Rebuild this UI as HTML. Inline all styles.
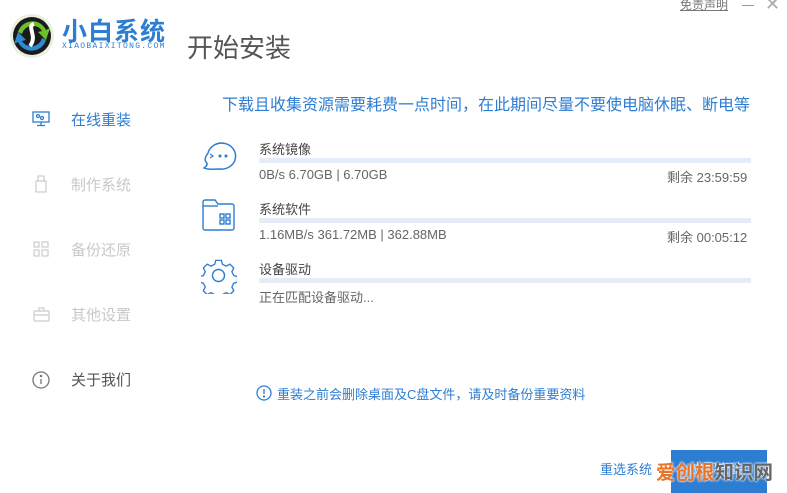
<!DOCTYPE html>
<html><head><meta charset="utf-8">
<style>
*{margin:0;padding:0;box-sizing:border-box}
body{width:787px;height:493px;background:#fff;position:relative;overflow:hidden;font-family:"Liberation Sans","Noto Sans CJK SC",sans-serif;color:#555}
.a{position:absolute;white-space:nowrap}
.bar{position:absolute;left:259px;width:492px;height:5px;background:#e4ecf8}
.nav{font-size:15px;left:71px}
</style></head><body>
<svg class="a" style="left:8px;top:12px" width="50" height="48" viewBox="0 0 50 48">
<circle cx="24" cy="24" r="22" fill="#e8f0e0"/>
<circle cx="24" cy="24" r="19" fill="#1a1a1a"/>
<path d="M10 20 A15 15 0 0 1 38 18 L42 16 L38 28 L30 20 L34 19 A11 11 0 0 0 14 22Z" fill="#6cbf2a"/>
<path d="M38 28 A15 15 0 0 1 10 30 L6 32 L10 20 L18 28 L14 29 A11 11 0 0 0 34 26Z" fill="#2e8bd0"/>
<path d="M26 12 C18 14 30 24 22 34" stroke="#fff" stroke-width="4" fill="none"/>
</svg>
<div class="a" style="left:62px;top:12px;font-size:25px;font-weight:bold;color:#2d7ed3;letter-spacing:1px">小白系统</div>
<div class="a" style="left:62px;top:42px;font-size:8px;color:#2d7ed3;letter-spacing:1.3px;font-family:'Liberation Mono',monospace">XIAOBAIXITONG.COM</div>
<div class="a" style="left:187px;top:28px;font-size:26px;color:#555">开始安装</div>
<div class="a" style="left:680px;top:-4px;font-size:12px;color:#777;text-decoration:underline">免责声明</div>
<div class="a" style="left:742px;top:5px;width:12px;height:1px;background:#999"></div>
<div class="a" style="left:765px;top:-6px;font-size:18px;color:#aaa;font-weight:200">✕</div>

<svg class="a" style="left:32px;top:111px" width="18" height="16" viewBox="0 0 18 16" fill="none" stroke="#2d7ed3" stroke-width="1.3"><rect x="1" y="1" width="16" height="10"/><line x1="9" y1="11" x2="9" y2="14"/><line x1="5" y1="14.5" x2="13" y2="14.5"/><circle cx="6" cy="5" r="1.5"/><circle cx="10" cy="7" r="1.5"/></svg>
<div class="a nav" style="top:109px;color:#2d7ed3">在线重装</div>
<svg class="a" style="left:35px;top:175px" width="12" height="18" viewBox="0 0 12 18" fill="none" stroke="#ccc" stroke-width="1.2"><rect x="1" y="6" width="10" height="11"/><rect x="3" y="1" width="6" height="5"/></svg>
<div class="a nav" style="top:174px;color:#c8c8c8">制作系统</div>
<svg class="a" style="left:33px;top:241px" width="16" height="16" viewBox="0 0 16 16" fill="none" stroke="#ccc" stroke-width="1.2"><rect x="1" y="1" width="5" height="5"/><rect x="9" y="1" width="6" height="5"/><rect x="1" y="9" width="5" height="6"/><rect x="9" y="9" width="6" height="6"/></svg>
<div class="a nav" style="top:239px;color:#c8c8c8">备份还原</div>
<svg class="a" style="left:33px;top:307px" width="17" height="15" viewBox="0 0 17 15" fill="none" stroke="#ccc" stroke-width="1.2"><rect x="1" y="4" width="15" height="10" rx="1"/><path d="M6 4V1h5v3M1 8h15"/></svg>
<div class="a nav" style="top:304px;color:#c8c8c8">其他设置</div>
<svg class="a" style="left:32px;top:371px" width="18" height="18" viewBox="0 0 18 18" fill="none" stroke="#777" stroke-width="1.3"><circle cx="9" cy="9" r="8"/><line x1="9" y1="8" x2="9" y2="13"/><circle cx="9" cy="5" r=".6" fill="#777"/></svg>
<div class="a nav" style="top:369px;color:#555">关于我们</div>

<div class="a" style="left:222px;top:91px;font-size:16px;color:#2d7ed3">下载且收集资源需要耗费一点时间，在此期间尽量不要使电脑休眠、断电等</div>

<svg class="a" style="left:200px;top:139px" width="40" height="34" viewBox="0 0 40 34" fill="none" stroke="#2d7ed3" stroke-width="1.5"><path d="M8 14 A14 13 0 1 1 20 30 C14 30 8 31 4 29 C7 27 8 25 6 23 C4 20 6 17 8 14Z"/><path d="M10 15 l3 2 -3 2" stroke-width="1.2"/><circle cx="20" cy="17" r=".8" fill="#2d7ed3"/><circle cx="26" cy="17" r=".8" fill="#2d7ed3"/></svg>
<div class="a" style="left:259px;top:139px;font-size:13px;color:#444">系统镜像</div>
<div class="bar" style="top:158px"></div>
<div class="a" style="left:259px;top:167px;font-size:13px;color:#666">0B/s 6.70GB | 6.70GB</div>
<div class="a" style="left:667px;top:167px;font-size:13px;color:#666">剩余 23:59:59</div>

<svg class="a" style="left:201px;top:199px" width="36" height="32" viewBox="0 0 36 32" fill="none" stroke="#2d7ed3" stroke-width="1.4"><path d="M2 3 a2 2 0 0 1 2-2 h10 l3 4 h14 a2 2 0 0 1 2 2 v22 a2 2 0 0 1-2 2 h-27 a2 2 0 0 1-2-2Z"/><path d="M2 7h15"/><rect x="19" y="15" width="4" height="4"/><rect x="25" y="15" width="4" height="4"/><rect x="19" y="21" width="4" height="4"/><rect x="25" y="21" width="4" height="4"/></svg>
<div class="a" style="left:259px;top:199px;font-size:13px;color:#444">系统软件</div>
<div class="bar" style="top:218px"></div>
<div class="a" style="left:259px;top:227px;font-size:13px;color:#666">1.16MB/s 361.72MB | 362.88MB</div>
<div class="a" style="left:667px;top:227px;font-size:13px;color:#666">剩余 00:05:12</div>

<svg class="a" style="left:201px;top:258px" width="36" height="36" viewBox="0 0 36 36" fill="none" stroke="#2d7ed3" stroke-width="1.4"><path d="M15 2h6l1 4 4 2 4-2 4 4-2 4 2 4 4 1v6l-4 1-2 4 2 4-4 4-4-2-4 2-1 4h-6l-1-4-4-2-4 2-4-4 2-4-2-4-4-1v-6l4-1 2-4-2-4 4-4 4 2 4-2Z" transform="scale(0.95) translate(0.5,0.5)"/><circle cx="17.5" cy="17.5" r="6"/></svg>
<div class="a" style="left:259px;top:259px;font-size:13px;color:#444">设备驱动</div>
<div class="bar" style="top:278px"></div>
<div class="a" style="left:259px;top:287px;font-size:13px;color:#666">正在匹配设备驱动...</div>

<svg class="a" style="left:256px;top:385px" width="16" height="16" viewBox="0 0 16 16" fill="none" stroke="#2d7ed3" stroke-width="1.3"><circle cx="8" cy="8" r="7"/><line x1="8" y1="4" x2="8" y2="9"/><circle cx="8" cy="11.5" r=".5" fill="#2d7ed3"/></svg>
<div class="a" style="left:277px;top:384px;font-size:13px;color:#2d7ed3">重装之前会删除桌面及C盘文件，请及时备份重要资料</div>

<div class="a" style="left:600px;top:459px;font-size:13px;color:#2d7ed3">重选系统</div>
<div class="a" style="left:671px;top:450px;width:96px;height:43px;background:#2d7ed3;color:#cfe0f5;font-size:13px;padding:8px 0 0 20px">立即安装</div>
<div class="a" style="left:656px;top:456px;font-size:19.5px;font-weight:bold;color:#e8742a;text-shadow:0 0 2px #fff,0 0 2px #fff">爱创根<span style="color:#666">知识网</span></div>
</body></html>
